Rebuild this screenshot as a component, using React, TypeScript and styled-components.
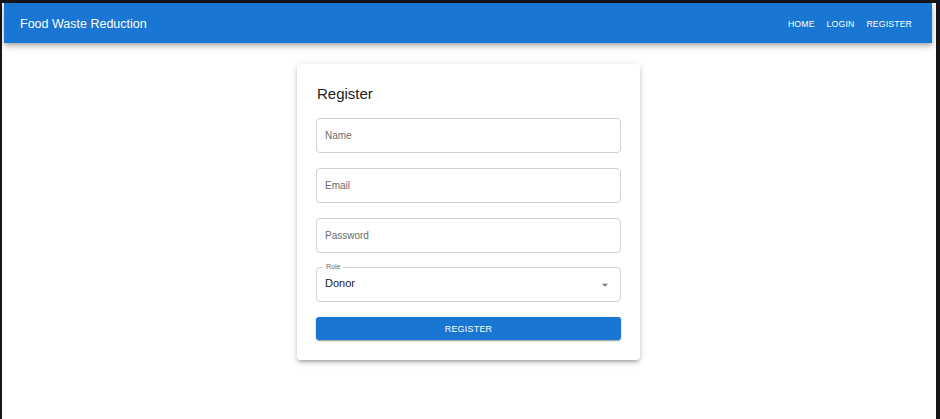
import React from 'react'
import styled, { createGlobalStyle } from 'styled-components'

const GlobalStyle = createGlobalStyle`
  html, body {
    margin: 0;
    padding: 0;
    height: 100%;
    background: #15161a;
  }
  #root {
    height: 100%;
  }
  * {
    box-sizing: border-box;
  }
`

const StyledFrame = styled.div`
  height: 419px;
  padding: 3px 4px 0 2px;
  background: #15161a;
  font-family: 'Liberation Sans', Arial, sans-serif;
`

const StyledPage = styled.div`
  height: 100%;
  background: #ffffff;
  display: flex;
  flex-direction: column;
`

const StyledAppBar = styled.header`
  height: 40px;
  margin: 0 4px 0 2px;
  padding: 1px 20px 0 16px;
  background-color: #1976d2;
  color: #ffffff;
  display: flex;
  align-items: center;
  justify-content: space-between;
  box-shadow: 0 2px 4px -1px rgba(0, 0, 0, 0.2), 0 4px 5px 0 rgba(0, 0, 0, 0.14),
    0 1px 10px 0 rgba(0, 0, 0, 0.12);
`

const StyledBrand = styled.div`
  font-size: 12.5px;
  font-weight: 400;
`

const StyledNav = styled.nav`
  display: flex;
  align-items: center;
  gap: 12px;
`

const StyledNavLink = styled.a`
  font-size: 8.7px;
  font-weight: 500;
  letter-spacing: 0.15px;
  text-transform: uppercase;
  color: #ffffff;
  cursor: pointer;
`

const StyledMain = styled.main`
  display: flex;
  justify-content: center;
  padding: 21px 1px 0 0;
`

const StyledCard = styled.div`
  width: 343px;
  padding: 19px 19px 20px;
  background: #ffffff;
  border-radius: 4px;
  box-shadow: 0 3px 3px -2px rgba(0, 0, 0, 0.2), 0 3px 4px 0 rgba(0, 0, 0, 0.14),
    0 1px 8px 0 rgba(0, 0, 0, 0.12);
`

const StyledTitle = styled.div`
  font-size: 15px;
  line-height: 20px;
  color: #222222;
  margin: 1px 0 14px 1px;
`

const StyledForm = styled.form`
  display: flex;
  flex-direction: column;
  gap: 15px;
`

const StyledField = styled.div<{ $tight?: boolean }>`
  position: relative;
  height: 35px;
  margin-top: ${(p) => (p.$tight ? '-1px' : '0')};
  border: 1px solid #d0d0d0;
  border-radius: 4px;
  display: flex;
  align-items: center;
  padding: 0 8px;
`

const StyledPlaceholder = styled.span`
  font-size: 10px;
  color: #6b6b6b;
`

const StyledValue = styled.span`
  flex: 1;
  font-size: 11px;
  color: #222222;
  padding-bottom: 3px;
`

const StyledFloatingLabel = styled.span`
  position: absolute;
  top: -5px;
  left: 6px;
  padding: 0 3px;
  background: #ffffff;
  font-size: 7px;
  line-height: 8px;
  color: #6b6b6b;
`

const StyledButton = styled.button`
  height: 23px;
  border: none;
  border-radius: 3px;
  background-color: #1976d2;
  color: #ffffff;
  font-family: inherit;
  font-size: 9px;
  font-weight: 500;
  letter-spacing: 0.2px;
  text-transform: uppercase;
  cursor: pointer;
  box-shadow: 0 2px 1px -1px rgba(0, 0, 0, 0.2), 0 1px 2px 0 rgba(0, 0, 0, 0.14),
    0 1px 3px 0 rgba(0, 0, 0, 0.12);
`

const ArrowIcon = () => (
  <svg width="14" height="14" viewBox="0 0 24 24" aria-hidden="true">
    <path d="M7 10l5 5 5-5z" fill="#757575" />
  </svg>
)

const fields = ['Name', 'Email', 'Password']

export default function App() {
  return (
    <>
      <GlobalStyle />
      <StyledFrame>
        <StyledPage>
          <StyledAppBar>
            <StyledBrand>Food Waste Reduction</StyledBrand>
            <StyledNav>
              <StyledNavLink>Home</StyledNavLink>
              <StyledNavLink>Login</StyledNavLink>
              <StyledNavLink>Register</StyledNavLink>
            </StyledNav>
          </StyledAppBar>
          <StyledMain>
            <StyledCard>
              <StyledTitle>Register</StyledTitle>
              <StyledForm onSubmit={(e) => e.preventDefault()}>
                {fields.map((f) => (
                  <StyledField key={f}>
                    <StyledPlaceholder>{f}</StyledPlaceholder>
                  </StyledField>
                ))}
                <StyledField $tight>
                  <StyledFloatingLabel>Role</StyledFloatingLabel>
                  <StyledValue>Donor</StyledValue>
                  <ArrowIcon />
                </StyledField>
                <StyledButton type="submit">Register</StyledButton>
              </StyledForm>
            </StyledCard>
          </StyledMain>
        </StyledPage>
      </StyledFrame>
    </>
  )
}
